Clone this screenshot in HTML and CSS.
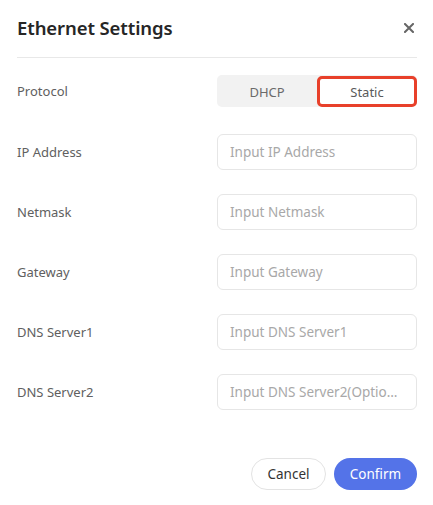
FILE: index.html
```html
<!DOCTYPE html>
<html lang="en">
<head>
<meta charset="utf-8">
<title>Ethernet Settings</title>
<link rel="stylesheet" href="styles.css">
</head>
<body>
<div class="dialog">
  <div class="header">
    <h1 class="title">Ethernet Settings</h1>
    <button class="close" aria-label="Close">
      <svg width="10" height="10" viewBox="0 0 10 10"><path d="M1 1L9 9M9 1L1 9" stroke="#666" stroke-width="2" stroke-linecap="square"/></svg>
    </button>
  </div>
  <div class="form">
    <div class="row row-protocol">
      <span class="label">Protocol</span>
      <div class="segmented">
        <span class="seg">DHCP</span>
        <span class="seg seg-active">Static</span>
      </div>
    </div>
    <div class="row">
      <span class="label">IP Address</span>
      <input class="input" placeholder="Input IP Address">
    </div>
    <div class="row">
      <span class="label">Netmask</span>
      <input class="input" placeholder="Input Netmask">
    </div>
    <div class="row">
      <span class="label">Gateway</span>
      <input class="input" placeholder="Input Gateway">
    </div>
    <div class="row">
      <span class="label">DNS Server1</span>
      <input class="input" placeholder="Input DNS Server1">
    </div>
    <div class="row">
      <span class="label">DNS Server2</span>
      <input class="input" placeholder="Input DNS Server2(Optional)">
    </div>
  </div>
  <div class="footer">
    <button class="btn btn-cancel">Cancel</button>
    <button class="btn btn-confirm">Confirm</button>
  </div>
</div>
</body>
</html>
```
FILE: styles.css
```css
* { box-sizing: border-box; }
html, body { margin: 0; padding: 0; background: #fff; }
body {
  font-family: "Noto Sans", "Open Sans", sans-serif;
  color: #555;
  width: 433px;
  height: 505px;
}
.dialog {
  padding: 0 16px 0 17px;
}
.header {
  height: 58px;
  display: flex;
  align-items: center;
  justify-content: space-between;
  border-bottom: 1px solid #e8e8e8;
  padding-bottom: 2px;
}
.title {
  margin: 0;
  font-size: 18.5px;
  font-weight: 600;
  color: #262626;
  letter-spacing: -0.1px;
}
.close {
  border: 0;
  background: none;
  padding: 0;
  width: 10px;
  height: 10px;
  margin-right: 3px;
  display: flex;
}
.form {
  padding-top: 15px;
  display: flex;
  flex-direction: column;
  gap: 24px;
}
.row {
  display: flex;
  align-items: center;
  justify-content: space-between;
  height: 36px;
}
.row-protocol { margin-bottom: 1px; }
.label {
  font-size: 13px;
  color: #606060;
}
.segmented {
  width: 200px;
  height: 32px;
  background: #f2f2f2;
  border-radius: 5px;
  display: flex;
  padding: 1px 0 0 0;
}
.seg {
  flex: 1;
  display: flex;
  align-items: center;
  justify-content: center;
  font-size: 13px;
  color: #6a6a6a;
}
.seg-active {
  flex: 0 0 100px;
  background: #fff;
  border: 3px solid #e8402a;
  border-radius: 5px;
  color: #5a5a5a;
  height: 31px;
}
.input {
  width: 200px;
  height: 36px;
  border: 1px solid #e6e6e6;
  border-radius: 6px;
  padding: 0 12px;
  font-family: inherit;
  font-size: 13.5px;
  color: #333;
  outline: none;
  text-overflow: ellipsis;
}
.input::placeholder { color: #a8a8a8; }
.footer {
  display: flex;
  justify-content: flex-end;
  gap: 8px;
  margin-top: 48px;
}
.btn {
  height: 32px;
  border-radius: 16px;
  font-family: inherit;
  font-size: 13.5px;
  padding: 0;
  cursor: pointer;
}
.btn-cancel {
  width: 75px;
  background: #fff;
  border: 1px solid #e3e3e3;
  color: #333;
}
.btn-confirm {
  width: 83px;
  background: #5473e8;
  border: 0;
  color: #fff;
}
```
